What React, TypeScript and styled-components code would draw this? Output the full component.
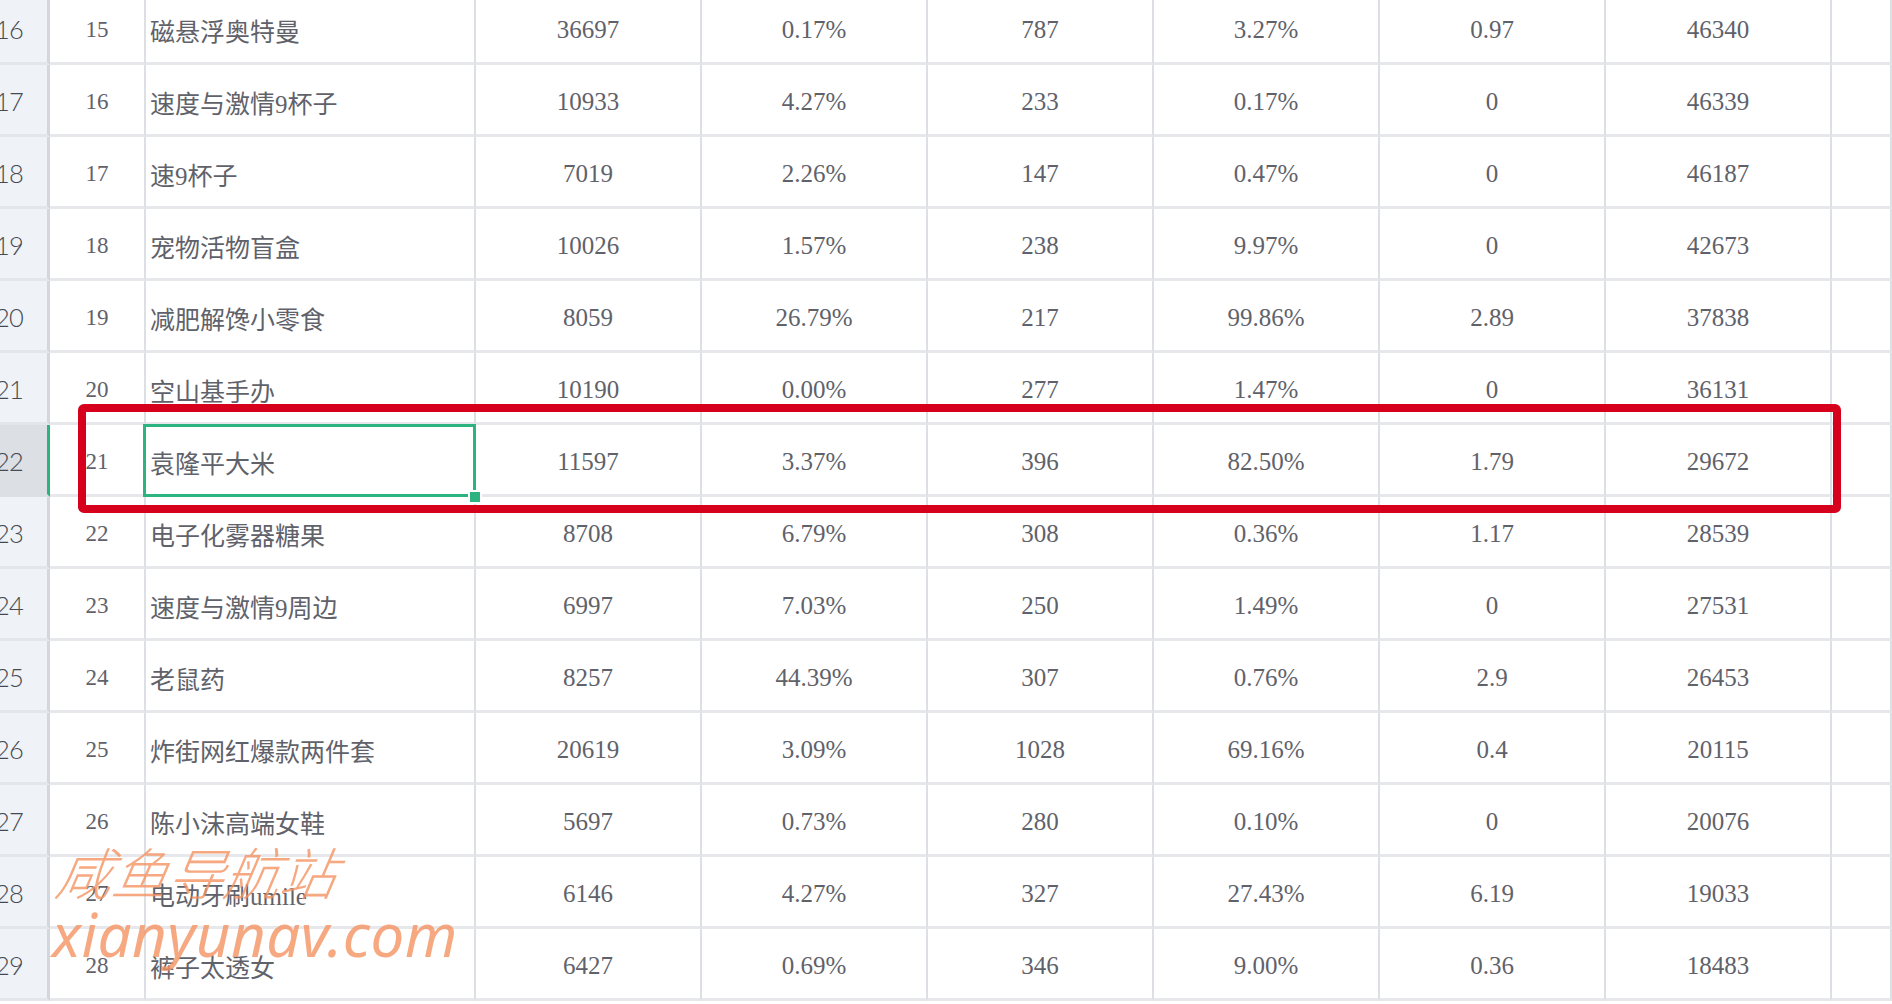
import styled, { createGlobalStyle } from 'styled-components';

const GlobalStyle = createGlobalStyle`
  html, body {
    margin: 0;
    padding: 0;
    background: #ffffff;
  }
  * {
    box-sizing: border-box;
  }
`;

const Page = styled.div`
  position: relative;
  width: 1892px;
  height: 1004px;
  overflow: hidden;
  background: #ffffff;
`;

const Sheet = styled.div`
  display: flex;
  flex-direction: column;
  margin-top: -7px;
`;

const Row = styled.div`
  position: relative;
  display: grid;
  grid-template-columns: 50px 96px 330px repeat(6, 226px) 1fr;
  height: 72px;
`;

const RowHead = styled.div<{ $active?: boolean }>`
  display: flex;
  align-items: center;
  justify-content: flex-end;
  padding-right: 24px;
  padding-top: 3px;
  overflow: hidden;
  background: ${(p) => (p.$active ? '#dcdfe4' : '#eff2f6')};
  border-right: 3px solid ${(p) => (p.$active ? '#2db37f' : '#d3d6db')};
  border-bottom: 3px solid ${(p) => (p.$active ? '#dcdfe4' : '#e3e6ea')};
  font-family: Lato, 'Noto Sans', sans-serif;
  font-size: 25.5px;
  font-weight: 300;
  letter-spacing: -0.8px;
  color: #454a52;
  white-space: nowrap;
`;

const Cell = styled.div<{ $align?: 'left' | 'center'; $small?: boolean }>`
  position: relative;
  display: flex;
  align-items: center;
  justify-content: ${(p) => (p.$align === 'left' ? 'flex-start' : 'center')};
  padding-left: ${(p) => (p.$align === 'left' ? '4px' : '0')};
  padding-top: 5px;
  border-right: 2px solid #dcdfe3;
  border-bottom: 3px solid #e6e8eb;
  font-family: 'Liberation Serif', 'Noto Sans CJK SC', serif;
  font-size: ${(p) => (p.$small ? '23px' : '25px')};
  color: #5f626a;
  white-space: nowrap;
`;

const Selection = styled.div`
  position: absolute;
  left: -3px;
  top: -1px;
  right: -2px;
  bottom: -3px;
  border: 3px solid #2db37f;
  z-index: 2;
  pointer-events: none;
`;

const Handle = styled.div`
  position: absolute;
  right: -9px;
  bottom: -10px;
  width: 14px;
  height: 14px;
  background: #2db37f;
  border: 2px solid #ffffff;
`;

const Highlight = styled.div`
  position: absolute;
  left: 78px;
  right: 51px;
  top: -21px;
  bottom: -16px;
  border: 8px solid #d6001c;
  border-radius: 6px;
  z-index: 3;
  pointer-events: none;
`;

const Watermark = styled.div`
  position: absolute;
  left: 52px;
  top: 838px;
  display: flex;
  flex-direction: column;
  z-index: 4;
  color: rgba(244, 146, 98, 0.8);
  font-style: italic;
  pointer-events: none;
`;

const MarkTitle = styled.div`
  font-family: 'Noto Sans CJK SC', sans-serif;
  font-size: 56px;
  font-weight: 300;
  line-height: 66px;
  transform: skewX(-10deg);
  transform-origin: left bottom;
`;

const MarkUrl = styled.div`
  font-family: 'Noto Sans', 'Open Sans', sans-serif;
  font-size: 60px;
  font-weight: 400;
  line-height: 60px;
  letter-spacing: 0.5px;
`;

type Item = [number, string, string, string, string, string, string, string];

const rows: Item[] = [
  [15, '磁悬浮奥特曼', '36697', '0.17%', '787', '3.27%', '0.97', '46340'],
  [16, '速度与激情9杯子', '10933', '4.27%', '233', '0.17%', '0', '46339'],
  [17, '速9杯子', '7019', '2.26%', '147', '0.47%', '0', '46187'],
  [18, '宠物活物盲盒', '10026', '1.57%', '238', '9.97%', '0', '42673'],
  [19, '减肥解馋小零食', '8059', '26.79%', '217', '99.86%', '2.89', '37838'],
  [20, '空山基手办', '10190', '0.00%', '277', '1.47%', '0', '36131'],
  [21, '袁隆平大米', '11597', '3.37%', '396', '82.50%', '1.79', '29672'],
  [22, '电子化雾器糖果', '8708', '6.79%', '308', '0.36%', '1.17', '28539'],
  [23, '速度与激情9周边', '6997', '7.03%', '250', '1.49%', '0', '27531'],
  [24, '老鼠药', '8257', '44.39%', '307', '0.76%', '2.9', '26453'],
  [25, '炸街网红爆款两件套', '20619', '3.09%', '1028', '69.16%', '0.4', '20115'],
  [26, '陈小沫高端女鞋', '5697', '0.73%', '280', '0.10%', '0', '20076'],
  [27, '电动牙刷umile', '6146', '4.27%', '327', '27.43%', '6.19', '19033'],
  [28, '裤子太透女', '6427', '0.69%', '346', '9.00%', '0.36', '18483'],
];

const ACTIVE = 21;

export default function App() {
  return (
    <Page>
      <GlobalStyle />
      <Sheet>
        {rows.map(([rank, name, ...values]) => {
          const active = rank === ACTIVE;
          return (
            <Row key={rank}>
              <RowHead $active={active}>{rank + 1}</RowHead>
              <Cell $small>{rank}</Cell>
              <Cell $align="left">
                {name}
                {active && (
                  <Selection>
                    <Handle />
                  </Selection>
                )}
              </Cell>
              {values.map((v, i) => (
                <Cell key={i}>{v}</Cell>
              ))}
              <Cell />
              {active && <Highlight />}
            </Row>
          );
        })}
      </Sheet>
      <Watermark>
        <MarkTitle>咸鱼导航站</MarkTitle>
        <MarkUrl>xianyunav.com</MarkUrl>
      </Watermark>
    </Page>
  );
}
